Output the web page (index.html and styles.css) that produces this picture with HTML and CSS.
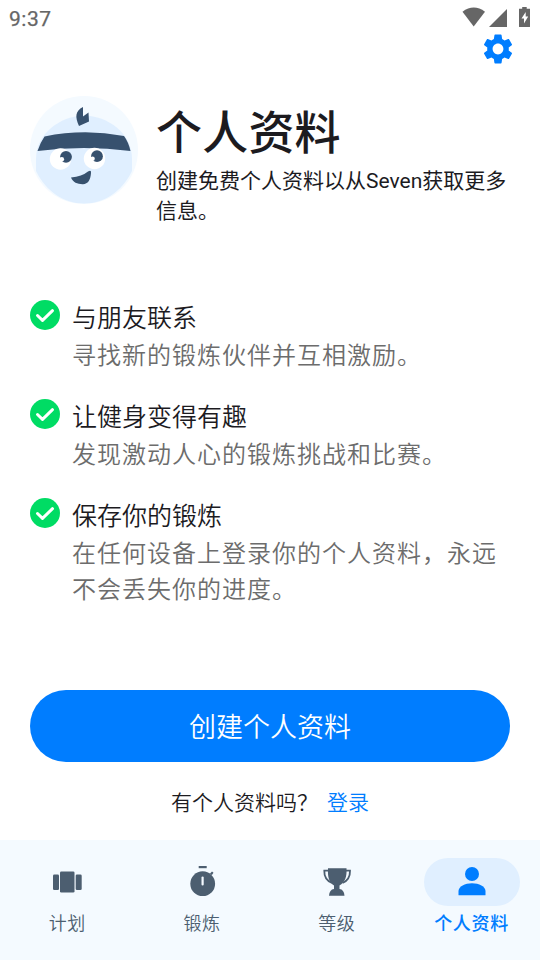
FILE: index.html
```html
<!DOCTYPE html>
<html lang="zh-CN">
<head>
<meta charset="utf-8">
<title>个人资料</title>
<link rel="stylesheet" href="styles.css">
</head>
<body>
<svg class="defs" width="0" height="0">
  <symbol id="check" viewBox="0 0 30 30"><circle cx="15" cy="15" r="15" fill="#00dc64"/><path d="M7.500 15.500l5 4.800 10-9.600" fill="none" stroke="#fff" stroke-width="3" stroke-linecap="round" stroke-linejoin="round"/></symbol>
</svg>
<div class="screen">
  <div class="status">
    <span class="time">9:37</span>
    <svg width="70" height="21" viewBox="0 0 70 21" fill="#666">
      <path d="M.5 4.800Q11.700-3.600 23 4.800L11.700 19.500z"/>
      <path d="M27 20L45 2v18z"/>
      <path fill-rule="evenodd" d="M60.200 0h4.500v1.700h3.300V19.500q0 .5-.5.500h-10q-.5 0-.5-.5V1.700h3.200zM63.700 5l-4.200 6.500h2.500v5l4.200-7h-2.500z"/>
    </svg>
  </div>
  <div class="toolbar">
    <svg width="36" height="36" viewBox="0 0 24 24" fill="#007dff"><path d="M19.140 12.940c.04-.3.060-.61.060-.94 0-.32-.02-.64-.07-.94l2.030-1.580c.18-.14.230-.41.120-.61l-1.920-3.320c-.12-.22-.37-.29-.59-.22l-2.390.96c-.5-.38-1.030-.7-1.620-.94L14.400 2.810c-.04-.24-.24-.41-.48-.41h-3.840c-.24 0-.43.170-.47.410L9.250 5.350c-.59.240-1.130.570-1.620.94l-2.390-.96c-.22-.08-.47 0-.59.220L2.740 8.870c-.12.210-.08.470.120.610l2.030 1.580c-.05.300-.09.630-.09.940s.02.640.07.940l-2.030 1.580c-.18.140-.23.410-.12.610l1.920 3.320c.12.220.370.290.590.220l2.390-.96c.5.380 1.030.7 1.620.94l.36 2.540c.05.240.240.410.480.410h3.840c.24 0 .440-.17.470-.41l.36-2.540c.59-.24 1.130-.56 1.620-.94l2.390.96c.22.080.470 0 .590-.22l1.920-3.320c.12-.22.070-.47-.12-.61l-2.010-1.580zM12 15.600c-1.980 0-3.600-1.620-3.600-3.600s1.620-3.600 3.600-3.600 3.600 1.620 3.600 3.600-1.620 3.600-3.600 3.600z"/></svg>
  </div>
  <header class="profile">
    <svg class="avatar" width="108" height="108" viewBox="0 0 108 108">
      <circle cx="54" cy="54" r="54" fill="#f4faff"/>
      <path d="M54 19.500C78 20 102 37 102 63v12C92 95 75 107.500 54 107.500S16 95 6 75V63C6 37 31 20 54 19.500z" fill="#e0efff"/>
      <path d="M14.500 40.500Q54 32.500 94 40Q98.500 46 100.500 55Q54 49 7.500 55Q10 47 14.500 40.500z" fill="#37516e"/>
      <path d="M53 11C45 15 45 21 49 30L59 25.500 58.500 16.500 53 20.500z" fill="#37516e"/>
      <circle cx="30.500" cy="63" r="10.700" fill="#fff"/><circle cx="64.500" cy="62.500" r="10.700" fill="#fff"/>
      <circle cx="36" cy="60.800" r="5.900" fill="#37516e"/><circle cx="67" cy="60.200" r="5.900" fill="#37516e"/>
      <circle cx="31.800" cy="63.200" r="2.300" fill="#fff"/><circle cx="62.500" cy="62.800" r="2.300" fill="#fff"/>
      <path d="M41 81.500Q52 80.500 58 75.500Q61.500 73.500 61 77C60.500 84 58 88 53 88.200C47.500 88.300 43 86.500 41 81.500z" fill="#37516e"/>
    </svg>
    <div class="intro">
      <h1>个人资料</h1>
      <p>创建免费个人资料以从Seven获取更多信息。</p>
    </div>
  </header>
  <ul class="features">
    <li><svg width="30" height="30"><use href="#check"/></svg><div><h2>与朋友联系</h2><p>寻找新的锻炼伙伴并互相激励。</p></div></li>
    <li><svg width="30" height="30"><use href="#check"/></svg><div><h2>让健身变得有趣</h2><p>发现激动人心的锻炼挑战和比赛。</p></div></li>
    <li><svg width="30" height="30"><use href="#check"/></svg><div><h2>保存你的锻炼</h2><p>在任何设备上登录你的个人资料，永远不会丢失你的进度。</p></div></li>
  </ul>
  <button class="create">创建个人资料</button>
  <div class="login"><span>有个人资料吗？</span><a>登录</a></div>
  <nav class="tabs">
    <a class="tab"><span class="pill"><svg width="36" height="36" viewBox="0 0 36 36" fill="#4c5e70"><rect x="4" y="10.500" width="6" height="15.500" rx="1.300"/><rect x="11" y="7.500" width="14.500" height="21" rx="1.300"/><rect x="26.700" y="10.500" width="6" height="15.500" rx="1.300"/></svg></span><span>计划</span></a>
    <a class="tab"><span class="pill"><svg width="36" height="36" viewBox="0 0 36 36" fill="#4c5e70"><rect x="14.700" y="2" width="8" height="2.200"/><path d="M26 9.500l2-2 1.500 1.300-1.700 2.400z"/><circle cx="18.700" cy="19.700" r="12.400"/><path d="M18.600 13.500v7" stroke="#f4faff" stroke-width="2.200" stroke-linecap="round"/></svg></span><span>锻炼</span></a>
    <a class="tab"><span class="pill"><svg width="36" height="36" viewBox="0 0 36 36" fill="#4c5e70"><path d="M9 4.200h18.500C28 13 26 18 20.500 21.500V25q4.500.5 5 6.700H10q.5-6.200 5-6.700v-3.500C10 18.500 8.500 13 9 4.200z"/><path d="M9.500 6.700H5.300Q5 15.500 13 19M27 6.700h4Q31.300 15.500 23.500 19" fill="none" stroke="#4c5e70" stroke-width="1.800"/></svg></span><span>等级</span></a>
    <a class="tab active"><span class="pill"><svg width="36" height="36" viewBox="0 0 36 36" fill="#007dff"><circle cx="18" cy="10" r="7"/><path d="M4.500 31V27C4.500 22.500 11 19.200 18 19.200S31.500 22.500 31.500 27v4q0 .3-.5.300H5q-.5 0-.5-.3z"/></svg></span><span>个人资料</span></a>
  </nav>
</div>
</body>
</html>
```
FILE: styles.css
```css
* { box-sizing: border-box; margin: 0; padding: 0; }
body { background: #fff; color: #1c1b1f; font-family: Roboto, "Noto Sans CJK SC", sans-serif; font-weight: 350; }
.defs { display: block; }
.screen { width: 540px; height: 960px; display: flex; flex-direction: column; overflow: hidden; }
.status { height: 36px; flex: none; padding: 7px 8px 0 9px; display: flex; justify-content: space-between; align-items: flex-start; color: #666; }
.time { font-size: 21px; line-height: 24px; font-weight: 450; letter-spacing: .5px; -webkit-text-stroke: .25px #666; }
.toolbar { height: 60px; flex: none; padding-right: 24px; display: flex; justify-content: flex-end; }
.toolbar svg { margin-top: -5px; }
.profile { height: 204px; flex: none; display: flex; padding: 0 30px; gap: 18px; }
.avatar { flex: none; }
.intro { flex: 1; }
h1 { font-size: 46px; line-height: 70px; font-weight: 500; padding-top: 2px; margin-bottom: -2px; letter-spacing: .2px; }
.intro p { font-size: 21px; line-height: 30px; font-weight: 400; }
.features { height: 390px; flex: none; padding: 0 30px; list-style: none; display: flex; flex-direction: column; gap: 25px; }
.features li { display: flex; gap: 12px; }
.features svg { flex: none; }
h2 { font-size: 25px; line-height: 36px; font-weight: 350; padding-top: 1px; }
.features p { font-size: 24px; letter-spacing: 1px; line-height: 36px; color: #6c6c6c; padding-top: 1px; }
.create { height: 72px; flex: none; margin: 0 30px; padding-top: 4px; border: 0; border-radius: 36px; background: #007dff; color: #fff; font: 350 27px/36px Roboto, "Noto Sans CJK SC", sans-serif; }
.login { height: 78px; flex: none; padding-top: 26px; display: flex; justify-content: center; gap: 9px; font-size: 21px; line-height: 30px; }
.login a { color: #007dff; }
.tabs { height: 120px; flex: none; display: grid; grid-template-columns: repeat(4, 1fr); padding-right: 1px; background: #f4faff; color: #4c5e70; }
.tab { display: flex; flex-direction: column; align-items: center; padding-top: 18px; font-size: 18px; line-height: 24px; letter-spacing: .75px; gap: 6px; }
.pill { width: 96px; height: 48px; border-radius: 24px; display: flex; align-items: center; justify-content: center; }
.active { color: #007dff; font-weight: 500; }
.active .pill { background: #e0efff; }
```
